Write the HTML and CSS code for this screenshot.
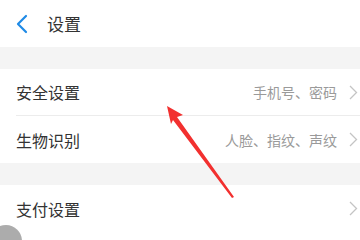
FILE: index.html
```html
<!DOCTYPE html>
<html lang="zh-CN">
<head>
    <meta charset="UTF-8">
    <meta name="viewport" content="width=device-width, initial-scale=1.0">
    <title>设置</title>
    <link rel="stylesheet" href="styles.css">
</head>
<body>
    <div class="page">
        <header class="top-bar">
            <svg class="back-icon" width="12" height="20" viewBox="0 0 12 20">
                <path d="M10 2 L2 10 L10 18" fill="none" stroke="#1e8ae6" stroke-width="2.2" stroke-linecap="round" stroke-linejoin="round"/>
            </svg>
            <h1 class="title">设置</h1>
        </header>

        <div class="gap"></div>

        <div class="group">
            <div class="row">
                <span class="row-label">安全设置</span>
                <span class="row-value">手机号、密码</span>
                <svg class="chevron" width="9" height="15" viewBox="0 0 9 15"><path d="M1 1 L7.5 7.5 L1 14" fill="none" stroke="#c4c4c4" stroke-width="1.3"/></svg>
            </div>
            <div class="row">
                <span class="row-label">生物识别</span>
                <span class="row-value">人脸、指纹、声纹</span>
                <svg class="chevron" width="9" height="15" viewBox="0 0 9 15"><path d="M1 1 L7.5 7.5 L1 14" fill="none" stroke="#c4c4c4" stroke-width="1.3"/></svg>
            </div>
        </div>

        <div class="gap"></div>

        <div class="group">
            <div class="row">
                <span class="row-label">支付设置</span>
                <span class="row-value"></span>
                <svg class="chevron" width="9" height="15" viewBox="0 0 9 15"><path d="M1 1 L7.5 7.5 L1 14" fill="none" stroke="#c4c4c4" stroke-width="1.3"/></svg>
            </div>
        </div>

        <!-- annotation arrow over the list -->
        <svg class="pointer-arrow" width="360" height="240" viewBox="0 0 360 240">
            <polygon points="167,106 183,115 177,117 234,197 232,198 173,120 171,124" fill="#f2302f"/>
        </svg>

        <div class="float-ball"></div>
    </div>
</body>
</html>
```

FILE: styles.css
```css
body {
    margin: 0;
    font-family: "Noto Sans CJK SC", "Noto Sans", sans-serif;
    background-color: #fff;
}

.page {
    position: relative;
    width: 360px;
    height: 240px;
    overflow: hidden;
    background-color: #fff;
}

.top-bar {
    height: 47px;
    display: flex;
    align-items: center;
    padding-left: 16px;
    box-sizing: border-box;
}

.back-icon {
    margin-right: 19px;
}

.title {
    margin: 0;
    font-size: 17px;
    font-weight: 400;
    color: #333;
}

.gap {
    height: 22px;
    background-color: #f4f4f4;
}

.row {
    height: 47px;
    margin-left: 16px;
    padding-right: 2px;
    display: flex;
    align-items: center;
    border-bottom: 1px solid #ececec;
    box-sizing: border-box;
}

.group .row:last-child {
    border-bottom: none;
}

.row-label {
    flex: 1;
    font-size: 16px;
    color: #333;
}

.row-value {
    font-size: 14px;
    color: #9a9a9a;
    margin-right: 12px;
}

.group:last-of-type .row:last-child {
    border-bottom: 1px solid #ececec;
    height: 49px;
}

.pointer-arrow {
    position: absolute;
    left: 0;
    top: 0;
}

.float-ball {
    position: absolute;
    left: -10px;
    top: 225px;
    width: 32px;
    height: 32px;
    border-radius: 50%;
    background-color: #acacac;
}
```
